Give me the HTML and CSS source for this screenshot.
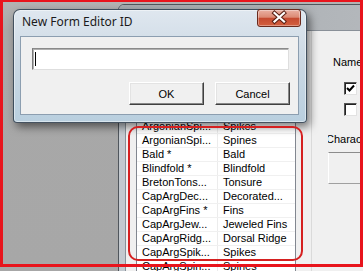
FILE: index.html
```html
<!DOCTYPE html>
<html lang="en">
<head>
    <meta charset="UTF-8">
    <title>New Form Editor ID</title>
    <link rel="stylesheet" href="styles.css">
</head>
<body>
    <div class="desk">
        <!-- main editor window, behind the dialog -->
        <div class="main-win">
            <div class="main-title"></div>
            <div class="main-body">
                <div class="main-client">
                    <div class="list">
                        <div class="row"><div class="cell id">ArgonianSpi...</div><div class="cell name">Spikes</div></div>
                        <div class="row"><div class="cell id">ArgonianSpi...</div><div class="cell name">Spines</div></div>
                        <div class="row"><div class="cell id">Bald *</div><div class="cell name">Bald</div></div>
                        <div class="row"><div class="cell id">Blindfold *</div><div class="cell name">Blindfold</div></div>
                        <div class="row"><div class="cell id">BretonTons...</div><div class="cell name">Tonsure</div></div>
                        <div class="row"><div class="cell id">CapArgDec...</div><div class="cell name">Decorated...</div></div>
                        <div class="row"><div class="cell id">CapArgFins *</div><div class="cell name">Fins</div></div>
                        <div class="row"><div class="cell id">CapArgJew...</div><div class="cell name">Jeweled Fins</div></div>
                        <div class="row"><div class="cell id">CapArgRidg...</div><div class="cell name">Dorsal Ridge</div></div>
                        <div class="row"><div class="cell id">CapArgSpik...</div><div class="cell name">Spikes</div></div>
                        <div class="row"><div class="cell id">CapArgSpin...</div><div class="cell name">Spines</div></div>
                    </div>
                    <div class="split"></div>
                    <div class="side">
                        <div class="side-label">Name</div>
                        <div class="check first">
                            <svg width="11" height="11" viewBox="0 0 11 11"><path d="M2 5 L4.5 7.5 L9 2.5" fill="none" stroke="#000" stroke-width="2"/></svg>
                        </div>
                        <div class="check"></div>
                        <div class="group">
                            <div class="group-label">Charac</div>
                            <div class="group-box"></div>
                        </div>
                    </div>
                </div>
            </div>
        </div>

        <!-- the modal dialog -->
        <div class="dlg">
            <div class="dlg-title">
                <span class="dlg-title-text">New Form Editor ID</span>
                <div class="dlg-close">
                    <svg width="44" height="18" viewBox="0 0 44 18">
                        <path d="M17.5 4 L27 12.5 M27 4 L17.5 12.5" stroke="#5a2014" stroke-width="4.2" stroke-linecap="square"/>
                        <path d="M17.5 4 L27 12.5 M27 4 L17.5 12.5" stroke="#fff" stroke-width="2.2" stroke-linecap="square"/>
                    </svg>
                </div>
            </div>
            <div class="dlg-client">
                <div class="dlg-input"><span class="caret"></span></div>
                <div class="dlg-buttons">
                    <button class="btn">OK</button>
                    <button class="btn">Cancel</button>
                </div>
            </div>
        </div>

        <!-- red annotation marks drawn over the screenshot -->
        <div class="mark-frame"></div>
        <div class="mark-list"></div>
    </div>
</body>
</html>
```

FILE: styles.css
```css
body {
    margin: 0;
    font-family: "Liberation Sans", Arial, sans-serif;
    font-size: 11px;
    color: #000;
}
.desk {
    position: relative;
    width: 363px;
    height: 271px;
    overflow: hidden;
    background: linear-gradient(#b4b4b4, #a8a8a8 30px, #a7a7a7);
}

/* main window */
.main-win {
    position: absolute;
    left: 118px;
    top: 4px;
    width: 260px;
    height: 290px;
    box-sizing: border-box;
    border: 1px solid #50565d;
    border-radius: 6px 6px 0 0;
    background: #c3c9cf;
    display: flex;
    flex-direction: column;
}
.main-title {
    height: 25px;
    border-radius: 5px 5px 0 0;
    background: linear-gradient(to right, #a6aaae, #b4b8bc);
}
.main-body {
    flex: 1;
    display: flex;
    padding-left: 6px;
}
.main-client {
    flex: 1;
    display: flex;
    align-items: flex-start;
    padding-left: 10px;
    border-left: 1px solid #899098;
    border-top: 1px solid #899098;
    background: #f0f0f0;
}
.list {
    margin-top: 88px;
    width: 160px;
    box-sizing: border-box;
    border: 1px solid #828790;
    border-bottom: none;
    background: #fff;
}
.row {
    display: flex;
    height: 14px;
    box-sizing: border-box;
    border-bottom: 1px solid #f0f0f0;
    line-height: 13px;
}
.cell {
    padding-left: 5px;
    white-space: nowrap;
    overflow: hidden;
    box-sizing: border-box;
}
.cell.id {
    width: 81px;
    border-right: 1px solid #ececec;
}
.cell.name {
    flex: 1;
}
.split {
    width: 1px;
    align-self: stretch;
    margin-left: 15px;
    background: #dadada;
}
.side {
    display: flex;
    flex-direction: column;
    padding-top: 25px;
}
.side-label {
    margin-left: 21px;
    line-height: 13px;
}
.check {
    width: 13px;
    height: 13px;
    box-sizing: border-box;
    margin-left: 32px;
    margin-top: 8px;
    background: #fff;
    border: 1px solid;
    border-color: #555 #e2e2e2 #e2e2e2 #555;
    box-shadow: inset 1px 1px 0 #222;
}
.check.first {
    margin-top: 13px;
}
.check svg {
    display: block;
    margin: 0 0 0 0;
}
.group {
    margin-left: 16px;
    margin-top: 17px;
    width: 40px;
    overflow: hidden;
}
.group-label {
    line-height: 13px;
    text-indent: -2px;
    white-space: nowrap;
}
.group-box {
    margin-top: 6px;
    height: 32px;
    box-sizing: border-box;
    border-top: 1px solid #8c8c8c;
    border-left: 1px solid #fff;
    border-bottom: 1px solid #a0a0a0;
}

/* dialog */
.dlg {
    position: absolute;
    left: 13px;
    top: 9px;
    width: 294px;
    height: 114px;
    box-sizing: border-box;
    padding: 0 7px 7px 6px;
    border: 1px solid rgba(30, 45, 60, 0.8);
    border-radius: 7px 7px 4px 4px;
    background: linear-gradient(#dfe7ef, #ccd9e4 45%, #b9cfdf);
    box-shadow: inset 0 0 0 1px rgba(255, 255, 255, 0.45), 3px 4px 9px rgba(0, 0, 0, 0.5);
    display: flex;
    flex-direction: column;
}
.dlg-title {
    display: flex;
    height: 26px;
}
.dlg-title-text {
    margin-left: 2px;
    padding-top: 2px;
    line-height: 19px;
    font-family: "Noto Sans", sans-serif;
    font-size: 12px;
    color: #1b1b1b;
}
.dlg-close {
    margin-left: auto;
    margin-top: -1px;
    margin-right: -2px;
    width: 44px;
    height: 18px;
    box-sizing: border-box;
    border: 1px solid #6a2a1d;
    border-radius: 3px;
    background: linear-gradient(#eab0a2, #dc8a74 45%, #c54a30 52%, #d3603f);
    box-shadow: inset 0 0 0 1px rgba(255, 255, 255, 0.35);
    overflow: hidden;
}
.dlg-close svg {
    display: block;
    margin: -1px 0 0 -1px;
}
.dlg-client {
    border: 1px solid #8c9eb0;
    background: #f0f0f0;
    padding: 11px 8px 9px 11px;
    display: flex;
    flex-direction: column;
}
.dlg-input {
    width: 257px;
    height: 22px;
    box-sizing: border-box;
    background: #fff;
    border: 1px solid;
    border-color: #8a8a8a #dedede #dedede #7a7a7a;
    box-shadow: inset 1px 1px 0 #b0b0b0;
    padding: 3px 0 0 2px;
}
.caret {
    display: block;
    width: 1px;
    height: 14px;
    background: #000;
}
.dlg-buttons {
    display: flex;
    justify-content: flex-end;
    gap: 11px;
    margin-top: 12px;
}
.btn {
    width: 75px;
    height: 23px;
    padding: 0;
    background: #f0f0f0;
    border: 1px solid;
    border-color: #fff #404040 #404040 #fff;
    box-shadow: inset -1px -1px 0 #888, inset 1px 1px 0 #e3e3e3;
    font-family: "Liberation Sans", Arial, sans-serif;
    font-size: 11px;
    color: #000;
}

/* annotation marks */
.mark-frame {
    position: absolute;
    left: 0;
    top: 0;
    width: 363px;
    height: 267px;
    box-sizing: border-box;
    border: solid #e8141c;
    border-width: 2px 3px 3px 3px;
}
.mark-list {
    position: absolute;
    left: 128px;
    top: 126px;
    width: 175px;
    height: 135px;
    box-sizing: border-box;
    border: 2px solid #d52020;
    border-radius: 10px;
}
```
